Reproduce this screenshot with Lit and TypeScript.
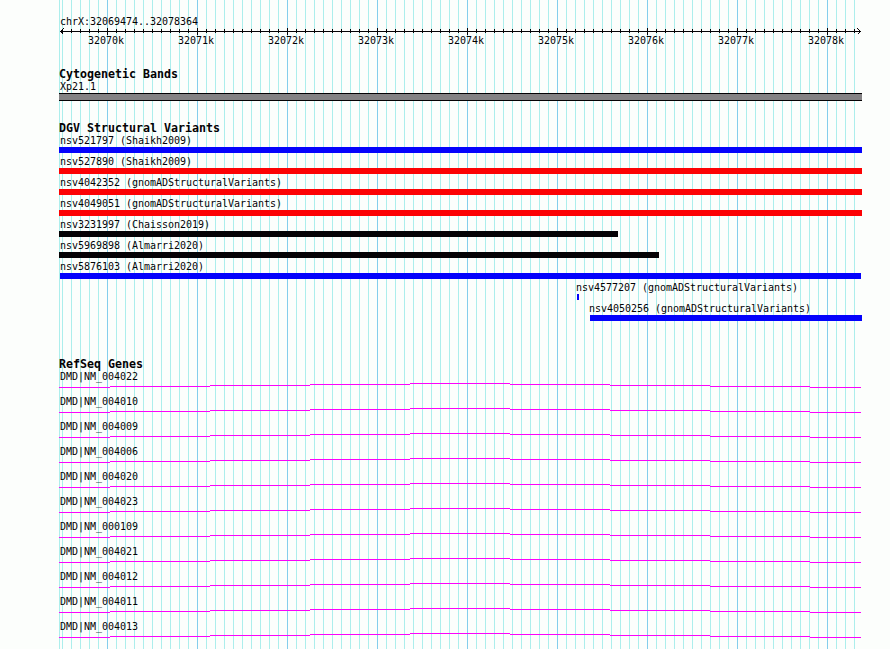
import { css, html, LitElement, svg } from 'lit';
import { customElement, property } from 'lit/decorators.js';

interface Variant {
  name: string;
  start: number;
  end: number;
  color: 'blue' | 'red' | 'black';
  labelAt?: number;
}

// horizontal values are pixels from the left edge of the panel
const PANEL_WIDTH = 803;
const FIRST_MAJOR = 48;
const MAJOR_STEP = 90;
const MINOR_STEP = 9;

const MAJORS = Array.from({ length: 9 }, (_, i) => ({
  x: FIRST_MAJOR + i * MAJOR_STEP,
  label: `${32070 + i}k`,
}));

const MINORS = Array.from({ length: 89 }, (_, i) => 3 + i * MINOR_STEP);

const VARIANTS: Variant[] = [
  { name: 'nsv521797 (Shaikh2009)', start: 0, end: 803, color: 'blue' },
  { name: 'nsv527890 (Shaikh2009)', start: 0, end: 803, color: 'red' },
  {
    name: 'nsv4042352 (gnomADStructuralVariants)',
    start: 0,
    end: 803,
    color: 'red',
  },
  {
    name: 'nsv4049051 (gnomADStructuralVariants)',
    start: 0,
    end: 803,
    color: 'red',
  },
  { name: 'nsv3231997 (Chaisson2019)', start: 0, end: 559, color: 'black' },
  { name: 'nsv5969898 (Almarri2020)', start: 0, end: 600, color: 'black' },
  { name: 'nsv5876103 (Almarri2020)', start: 1, end: 802, color: 'blue' },
  {
    name: 'nsv4577207 (gnomADStructuralVariants)',
    start: 518,
    end: 520,
    color: 'blue',
    labelAt: 516,
  },
  {
    name: 'nsv4050256 (gnomADStructuralVariants)',
    start: 531,
    end: 803,
    color: 'blue',
    labelAt: 529,
  },
];

const GENES = [
  'NM_004022',
  'NM_004010',
  'NM_004009',
  'NM_004006',
  'NM_004020',
  'NM_004023',
  'NM_000109',
  'NM_004021',
  'NM_004012',
  'NM_004011',
  'NM_004013',
];

// [x, y, width] of each level of the intron connector
const INTRON_STEPS = [
  [0, 4, 51],
  [51, 3, 100],
  [151, 2, 100],
  [251, 1, 100],
  [351, 0, 100],
  [451, 1, 100],
  [551, 2, 100],
  [651, 3, 100],
  [751, 4, 51],
];

@customElement('genome-grid')
export class GenomeGrid extends LitElement {
  static override styles = css`
    :host,
    svg {
      display: block;
      width: 100%;
      height: 100%;
    }
    .minor {
      fill: #aceeec;
    }
    .major {
      fill: #84ceec;
    }
  `;

  override render() {
    return html`
      <svg shape-rendering="crispEdges">
        <rect class="minor" x="0" width="1" height="100%"></rect>
        ${MINORS.map(
          x => svg`<rect class="minor" x=${x} width="1" height="100%"></rect>`
        )}
        ${MAJORS.map(
          ({ x }) =>
            svg`<rect class="major" x=${x} width="1" height="100%"></rect>`
        )}
      </svg>
    `;
  }
}

@customElement('genome-ruler')
export class GenomeRuler extends LitElement {
  static override styles = css`
    :host {
      display: block;
    }
    .region {
      height: 12px;
      line-height: 12px;
      padding-left: 1px;
    }
    .axis {
      display: block;
      height: 7px;
      fill: #040204;
    }
    .arrow {
      fill: none;
      stroke: #040204;
    }
    .labels {
      display: grid;
      grid-template-columns: repeat(9, 90px);
      height: 12px;
      line-height: 12px;
      margin-left: 2px;
    }
    .label {
      text-align: center;
    }
  `;

  override render() {
    return html`
      <div class="region">chrX:32069474..32078364</div>
      <svg
        class="axis"
        width=${PANEL_WIDTH}
        height="7"
        shape-rendering="crispEdges"
      >
        <rect x="1" y="3" width="801" height="1"></rect>
        ${MINORS.map(x => svg`<rect x=${x} y="1" width="1" height="4"></rect>`)}
        ${MAJORS.map(
          ({ x }) => svg`<rect x=${x} y="0" width="1" height="7"></rect>`
        )}
        <path class="arrow" d="M4.5 0.5L1.5 3.5L4.5 6.5"></path>
        <path class="arrow" d="M798.5 0.5L801.5 3.5L798.5 6.5"></path>
      </svg>
      <div class="labels">
        ${MAJORS.map(({ label }) => html`<span class="label">${label}</span>`)}
      </div>
    `;
  }
}

@customElement('genome-track')
export class GenomeTrack extends LitElement {
  static override styles = css`
    :host {
      display: block;
    }
    .title {
      height: 13px;
      font-size: 11.63px;
      font-weight: bold;
      line-height: 12px;
      letter-spacing: 0;
      white-space: pre;
    }
  `;

  @property()
  heading = '';

  override render() {
    return html`
      <div class="title">${this.heading}</div>
      <slot></slot>
    `;
  }
}

@customElement('app-root')
export class AppRoot extends LitElement {
  static override styles = css`
    :host {
      display: block;
      box-sizing: border-box;
      width: 890px;
      height: 649px;
      padding-left: 59px;
      overflow: hidden;
      background: #fcfefc;
      color: #040204;
      font-family: 'DejaVu Sans Mono', 'Liberation Mono', monospace;
      font-size: 10px;
      letter-spacing: -0.02px;
    }
    .panel {
      position: relative;
      box-sizing: border-box;
      width: 803px;
      height: 649px;
      padding-top: 16px;
    }
    .grid {
      position: absolute;
      inset: 0;
    }
    .content {
      position: relative;
    }
    .cytoband {
      margin-top: 21px;
    }
    .variants {
      margin-top: 21px;
    }
    .genes {
      margin-top: 34px;
    }
    .name {
      height: 12px;
      padding-left: 1px;
      line-height: 12px;
      white-space: pre;
    }
    .band {
      box-sizing: border-box;
      height: 8px;
      border: solid #040204;
      border-width: 1px 0;
      background: #848284;
    }
    .variant {
      height: 21px;
    }
    .bar {
      height: 6px;
    }
    .blue {
      background: #0402fc;
    }
    .red {
      background: #fc0204;
    }
    .black {
      background: #040204;
    }
    .gene {
      height: 25px;
    }
    .intron {
      display: block;
      fill: #fc02fc;
    }
  `;

  private renderVariant({ name, start, end, color, labelAt = 0 }: Variant) {
    return html`
      <div class="variant">
        <div class="name" style="margin-left: ${labelAt}px">${name}</div>
        <div
          class="bar ${color}"
          style="margin-left: ${start}px; width: ${end - start}px"
        ></div>
      </div>
    `;
  }

  private renderGene(id: string) {
    return html`
      <div class="gene">
        <div class="name">DMD|${id}</div>
        <svg
          class="intron"
          width=${PANEL_WIDTH}
          height="5"
          shape-rendering="crispEdges"
        >
          ${INTRON_STEPS.map(
            ([x, y, width]) =>
              svg`<rect x=${x} y=${y} width=${width} height="1"></rect>`
          )}
        </svg>
      </div>
    `;
  }

  override render() {
    return html`
      <div class="panel">
        <genome-grid class="grid"></genome-grid>
        <div class="content">
          <genome-ruler></genome-ruler>
          <genome-track class="cytoband" heading="Cytogenetic Bands">
            <div class="name">Xp21.1</div>
            <div class="band"></div>
          </genome-track>
          <genome-track class="variants" heading="DGV Structural Variants">
            ${VARIANTS.map(variant => this.renderVariant(variant))}
          </genome-track>
          <genome-track class="genes" heading="RefSeq Genes">
            ${GENES.map(id => this.renderGene(id))}
          </genome-track>
        </div>
      </div>
    `;
  }
}

declare global {
  interface HTMLElementTagNameMap {
    'genome-grid': GenomeGrid;
    'genome-ruler': GenomeRuler;
    'genome-track': GenomeTrack;
    'app-root': AppRoot;
  }
}
